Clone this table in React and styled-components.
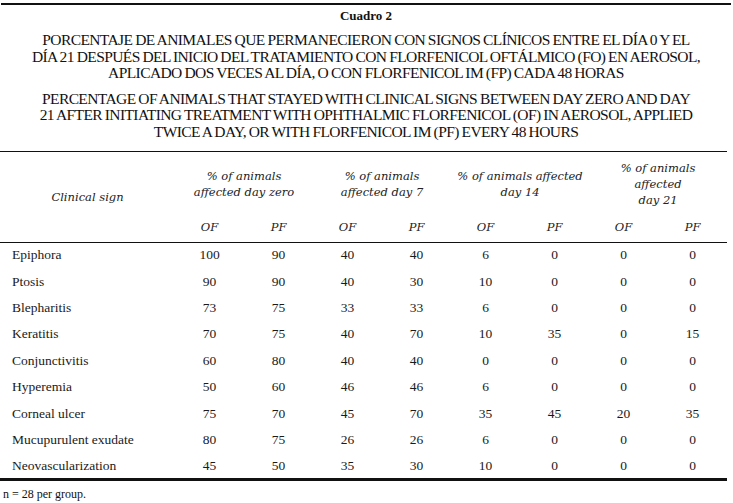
import styled, { createGlobalStyle } from "styled-components";

const GlobalStyle = createGlobalStyle`
  body {
    margin: 0;
    background: #fff;
    color: #111;
    font-family: "Liberation Serif", "Times New Roman", serif;
  }
`;

const rows = [
  ["Epiphora", 100, 90, 40, 40, 6, 0, 0, 0],
  ["Ptosis", 90, 90, 40, 30, 10, 0, 0, 0],
  ["Blepharitis", 73, 75, 33, 33, 6, 0, 0, 0],
  ["Keratitis", 70, 75, 40, 70, 10, 35, 0, 15],
  ["Conjunctivitis", 60, 80, 40, 40, 0, 0, 0, 0],
  ["Hyperemia", 50, 60, 46, 46, 6, 0, 0, 0],
  ["Corneal ulcer", 75, 70, 45, 70, 35, 45, 20, 35],
  ["Mucupurulent exudate", 80, 75, 26, 26, 6, 0, 0, 0],
  ["Neovascularization", 45, 50, 35, 30, 10, 0, 0, 0],
];

const groups = [
  ["% of animals", "affected day zero"],
  ["% of animals", "affected day 7"],
  ["% of animals affected", "day 14"],
  ["% of animals", "affected", "day 21"],
];

const App = () => {
  return (
    <Page>
      <GlobalStyle />
      <Caption>
        <Label>Cuadro 2</Label>
        <Title>
          PORCENTAJE DE ANIMALES QUE PERMANECIERON CON SIGNOS CLÍNICOS ENTRE EL DÍA 0 Y EL
          <br />
          DÍA 21 DESPUÉS DEL INICIO DEL TRATAMIENTO CON FLORFENICOL OFTÁLMICO (FO) EN AEROSOL,
          <br />
          APLICADO DOS VECES AL DÍA, O CON FLORFENICOL IM (FP) CADA 48 HORAS
        </Title>
        <Title>
          PERCENTAGE OF ANIMALS THAT STAYED WITH CLINICAL SIGNS BETWEEN DAY ZERO AND DAY
          <br />
          21 AFTER INITIATING TREATMENT WITH OPHTHALMIC FLORFENICOL (OF) IN AEROSOL, APPLIED
          <br />
          TWICE A DAY, OR WITH FLORFENICOL IM (PF) EVERY 48 HOURS
        </Title>
      </Caption>
      <Table>
        <colgroup>
          <col style={{ width: 175 }} />
          {Array.from({ length: 8 }).map((_, i) => (
            <col key={i} style={{ width: 69 }} />
          ))}
        </colgroup>
        <thead>
          <tr>
            <HeadCell rowSpan={2}>
              <SignHead>Clinical sign</SignHead>
            </HeadCell>
            {groups.map((g, i) => (
              <GroupCell key={i} colSpan={2}>
                {g.map((line, j) => (
                  <div key={j}>{line}</div>
                ))}
              </GroupCell>
            ))}
          </tr>
          <SubRow>
            {groups.map((_, i) => [
              <SubCell key={i + "o"}>OF</SubCell>,
              <SubCell key={i + "p"}>PF</SubCell>,
            ])}
          </SubRow>
        </thead>
        <tbody>
          {rows.map((r, i) => (
            <Row key={r[0]} last={i === rows.length - 1}>
              <SignCell>{r[0]}</SignCell>
              {r.slice(1).map((v, j) => (
                <ValueCell key={j}>{v}</ValueCell>
              ))}
            </Row>
          ))}
        </tbody>
      </Table>
      <Note>n = 28 per group.</Note>
    </Page>
  );
};

const Page = styled.div`
  width: 733px;
  height: 503px;
  overflow: hidden;
  padding-top: 3px;
  box-sizing: border-box;
`;

const Caption = styled.div`
  border-top: 2px solid #111;
  width: 730px;
  margin-left: 1px;
  text-align: center;
  padding-bottom: 11px;
`;

const Label = styled.div`
  font-weight: bold;
  font-size: 13px;
  line-height: 15px;
  margin-top: 3px;
`;

const Title = styled.p`
  margin: 9px 0 0;
  font-size: 15.5px;
  line-height: 16.5px;
  letter-spacing: -0.6px;
  word-spacing: -0.5px;
`;

const Table = styled.table`
  border-collapse: collapse;
  table-layout: fixed;
  width: 727px;
  font-size: 13.5px;
  color: #1a1a1a;
`;

const HeadCell = styled.th`
  border-top: 1.5px solid #111;
  border-bottom: 1.5px solid #111;
  font-weight: normal;
  padding: 0;
  vertical-align: middle;
`;

const SignHead = styled.span`
  font-family: "DejaVu Serif", serif;
  font-style: italic;
  font-size: 11.5px;
  color: #222;
`;

const GroupCell = styled.th`
  border-top: 1.5px solid #111;
  font-family: "DejaVu Serif", serif;
  font-style: italic;
  font-weight: normal;
  font-size: 11.5px;
  line-height: 16px;
  color: #222;
  height: 60px;
  padding: 2px 0 0;
  vertical-align: middle;
`;

const SubRow = styled.tr`
  height: 28px;
`;

const SubCell = styled.th`
  border-bottom: 1.5px solid #111;
  font-family: "DejaVu Serif", serif;
  font-style: italic;
  font-weight: normal;
  font-size: 11.5px;
  color: #222;
  padding: 0 0 2px;
`;

const Row = styled.tr`
  height: 26.4px;
  border-bottom: ${(p) => (p.last ? "3px solid #111" : "none")};
`;

const SignCell = styled.td`
  padding: 0 0 0 12px;
  white-space: nowrap;
`;

const ValueCell = styled.td`
  text-align: center;
  padding: 0;
`;

const Note = styled.div`
  font-size: 12px;
  margin: 6px 0 0 3px;
`;

export default App;
